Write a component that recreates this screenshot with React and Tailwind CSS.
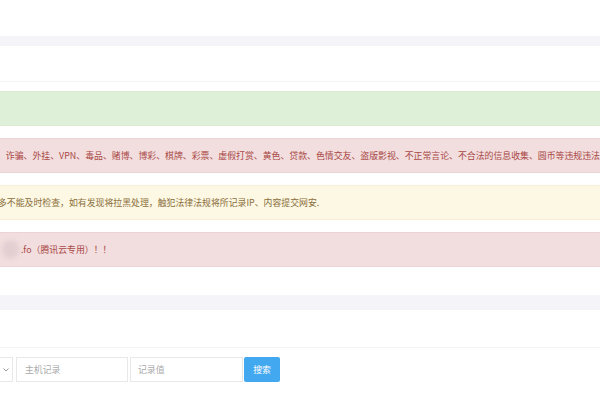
import React from 'react';

const font = { fontFamily: '"Noto Sans CJK SC", "Noto Sans", sans-serif' };

function Alert({ tone, children }) {
  const tones = {
    success: 'bg-[#dff0d8] border-[#d9ebd1] text-[#3c763d]',
    danger: 'bg-[#f2dede] border-[#ecd3d6] text-[#a94846]',
    warning: 'bg-[#fcf8e3] border-[#f8efd6] text-[#8a6d3b]',
  };
  return (
    <div className={`h-[35px] border-y flex items-center whitespace-nowrap overflow-hidden text-[8.9px] ${tones[tone]}`}>
      {children}
    </div>
  );
}

export default function App() {
  return (
    <div className="w-[600px] h-[400px] bg-white overflow-hidden" style={font}>
      <div className="h-[36px]"></div>
      <div className="h-[10px] bg-[#f5f5f9]"></div>
      <div className="h-[36px] border-b border-[#f4f4f4]"></div>

      <div className="pt-[9px] flex flex-col gap-[12px]">
        <Alert tone="success">{'\u00a0'}</Alert>
        <Alert tone="danger">
          <span className="-ml-[3px]">、诈骗、外挂、VPN、毒品、赌博、博彩、棋牌、彩票、虚假打赏、黄色、贷款、色情交友、盗版影视、不正常言论、不合法的信息收集、圆币等违规违法</span>
        </Alert>
        <Alert tone="warning">
          <span className="-ml-[2px]">多不能及时检查，如有发现将拉黑处理，触犯法律法规将所记录IP、内容提交网安.</span>
        </Alert>
        <Alert tone="danger">
          <span className="-ml-[3px]">：</span>
          <span className="inline-block w-[17px] h-[19px] -ml-[4px] mr-[2px] rounded-full bg-[#e3cfd2] blur-[2px]"></span>
          <span>.fo（腾讯云专用）！！</span>
        </Alert>
      </div>

      <div className="h-[28px]"></div>
      <div className="h-[15px] bg-[#f5f5f9]"></div>
      <div className="h-[38px] border-b border-[#f4f4f4]"></div>

      <div className="pt-[9px] flex items-center h-[34px]">
        <div className="w-[13px] h-[25px] border-r border-y border-[#e8e8e8] flex items-center justify-end pr-[3px]">
          <svg width="6" height="4" viewBox="0 0 6 4" fill="none" stroke="#999" strokeWidth="1">
            <path d="M0.5 0.5 L3 3 L5.5 0.5" />
          </svg>
        </div>
        <div className="ml-[3px] w-[112px] h-[25px] border border-[#e8e8e8] flex items-center pl-[8px] text-[8.9px] text-[#aaa]">
          主机记录
        </div>
        <div className="ml-[2px] w-[113px] h-[25px] border border-[#e8e8e8] flex items-center pl-[7px] text-[8.9px] text-[#aaa]">
          记录值
        </div>
        <button className="ml-[1px] w-[36px] h-[25px] bg-[#42a8f0] text-white text-[8.9px] rounded-[2px] flex items-center justify-center">
          搜索
        </button>
      </div>
    </div>
  );
}
